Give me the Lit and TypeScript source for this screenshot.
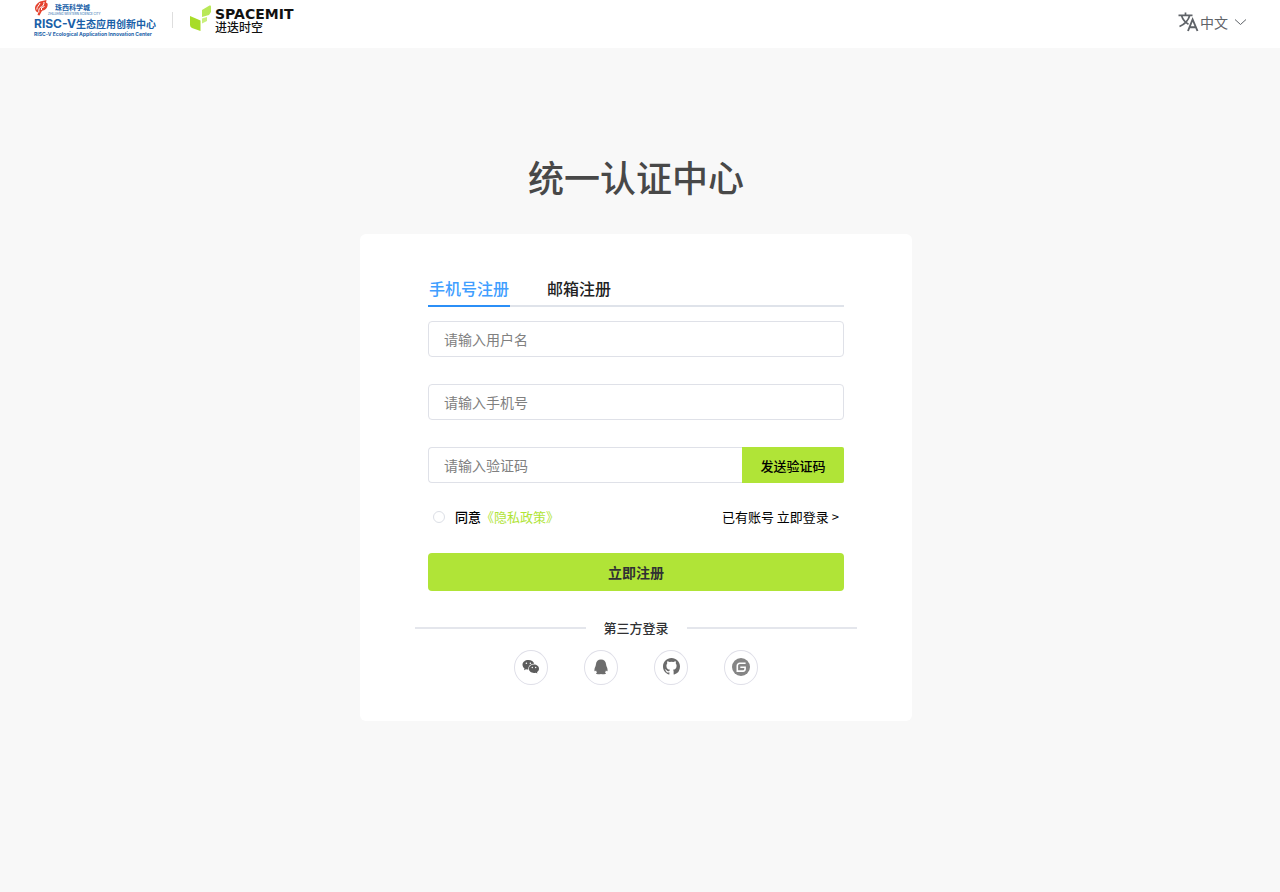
import { LitElement, html, css, svg } from "lit";
import { customElement, state } from "lit/decorators.js";
import { classMap } from "lit/directives/class-map.js";

const wechat = svg`<svg viewBox="0 0 18 16" width="18" height="16" fill="#5c5c5c" aria-hidden="true">
  <path fill-rule="evenodd" d="M6.400 1C3 1 .5 3.100.5 5.800c0 1.500.8 2.800 2 3.700L2 11.300l2-1.100c.8.2 1.600.3 2.400.3-.5-3.300 2.100-5.700 5.800-5.700C11.700 2.600 9.300 1 6.400 1ZM4.400 3.400a.8.8 0 1 1 0 1.600.8.8 0 0 1 0-1.600Zm4 0a.8.8 0 1 1 0 1.600.8.8 0 0 1 0-1.600Z"/>
  <path fill-rule="evenodd" d="M12 5.600c-2.900 0-5.100 1.900-5.100 4.200S9.100 14 12 14c.6 0 1.200-.1 1.800-.3l1.600.9-.4-1.500c1.200-.8 2-1.900 2-3.300 0-2.300-2.200-4.200-5-4.200Zm-1.700 2.200a.7.7 0 1 1 0 1.400.7.7 0 0 1 0-1.400Zm3.400 0a.7.7 0 1 1 0 1.400.7.7 0 0 1 0-1.400Z"/>
</svg>`;

const qq = svg`<svg viewBox="0 0 16 16" width="16" height="16" fill="#6d6d6d" aria-hidden="true">
  <path d="M8 .5C5 .5 3.200 2.300 3 5L2.600 7C1.900 8.300 1.400 9.600 1.400 11c0 1.100.4 1.600.9 1.100l.8-.6c.1.700.4 1.300.9 1.900-.6.200-1 .6-1 1 0 .8 3.600.9 5 .5 1.400.4 5 .3 5-.5 0-.4-.4-.8-1-1 .5-.6.8-1.200.9-1.900l.8.6c.5.5.9 0 .9-1.100 0-1.400-.5-2.700-1.200-4L13 5C12.800 2.300 11 .5 8 .5Z"/>
</svg>`;

const github = svg`<svg viewBox="0 0 16 16" width="17" height="17" fill="#6b6b6b" aria-hidden="true">
  <path d="M8 0C3.580 0 0 3.580 0 8c0 3.540 2.290 6.530 5.470 7.590.4.070.55-.17.55-.38v-1.700c-2.200.5-2.700-.3-3.100-1.100-.2-.5-.5-.9-.9-1.200-.3-.2-.6-.5 0-.5.7 0 1.200.5 1.400.9.7 1.100 1.800.9 2.600.6.1-.5.300-.9.6-1.100C4.700 10.900 3.200 9.900 3.200 7.300c0-.9.3-1.600.8-2.200-.1-.3-.3-1.100.1-2.100 0 0 .8-.2 2.200.8a7.600 7.600 0 0 1 3.400 0c1.400-1 2.200-.8 2.200-.8.4 1 .2 1.800.1 2.100.5.6.8 1.300.8 2.200 0 2.600-1.500 3.600-3.400 3.800.4.300.6.9.6 1.600v2.510c0 .21.15.46.55.38A8.010 8.010 0 0 0 16 8c0-4.420-3.580-8-8-8Z"/>
</svg>`;

const gitee = svg`<svg viewBox="0 0 18 18" width="18" height="18" aria-hidden="true">
  <circle cx="9" cy="9" r="9" fill="#858585"/>
  <path d="M13.600 5.300H7.800a2.500 2.500 0 0 0-2.500 2.500v5.300h5.800a2 2 0 0 0 2-2V9.300H8.300" fill="none" stroke="#fff" stroke-width="1.600"/>
</svg>`;

const providers = [
  { name: "微信登录", icon: wechat },
  { name: "QQ登录", icon: qq },
  { name: "GitHub登录", icon: github },
  { name: "Gitee登录", icon: gitee },
];

@customElement("app-header")
class AppHeader extends LitElement {
  static styles = css`
    :host { display: block; background: #fff; }
    .bar { display: flex; height: 48px; box-sizing: border-box; padding: 0 33px 0 34px; justify-content: space-between; }
    .brands { display: flex; align-items: flex-start; }
    .center { display: flex; flex-direction: column; color: #1a5fa8; text-decoration: none; white-space: nowrap; }
    .top { display: flex; height: 17px; }
    .city { display: flex; flex-direction: column; padding-top: 3px; }
    .city-name { font-size: 7px; line-height: 9px; font-weight: 700; padding-left: 7px; }
    .city-en { font-family: Inter, sans-serif; font-size: 3px; line-height: 4px; }
    .name { font-size: 10px; line-height: 14px; font-weight: 700; }
    .latin { font-family: Inter, sans-serif; font-size: 12px; }
    .name-en { font-family: Inter, sans-serif; font-size: 5px; line-height: 6px; font-weight: 700; }
    .rule { width: 1px; height: 16px; margin: 12px 17px 0 16px; background: #dedede; }
    .spacemit { display: flex; gap: 4px; padding-top: 5px; color: #111; text-decoration: none; }
    .words { display: flex; flex-direction: column; padding-top: 2px; }
    .wordmark { font-family: "DejaVu Sans", sans-serif; font-size: 14px; line-height: 14px; font-weight: 700; }
    .wordmark-cn { font-size: 12px; line-height: 12px; font-weight: 500; }
    .lang { display: flex; align-items: center; align-self: flex-start; gap: 1px; margin-top: 12px; padding: 0; border: 0; background: none; color: #5f6368; font: inherit; font-size: 14px; line-height: 20px; cursor: pointer; }
    .chevron { margin-left: 5px; }
  `;

  render() {
    return html`
      <header class="bar">
        <div class="brands">
          <a class="center" href="#">
            <span class="top">
              <svg width="14" height="16" viewBox="0 0 14 16" aria-hidden="true">
                <path d="M6 1.500 12.500 0l-.5 2.500 1.500 1c.6 2.500-.5 5.300-3 6.500-1 .4-2 .6-2.500.8L5.500 15.500 3.500 15l.8-2.500C2 12.300.8 10 1 7.500 1.200 5 3.500 3 6 1.500Z" fill="#e5432f"/>
                <path d="M2.800 9.500C2.800 6.500 5 6 6 3M4.800 12.500c-.3-3.500.7-5 2.800-5.800C9.200 6 10 4.500 10 2M7.500 10V7.800l3-1.300" fill="none" stroke="#fff"/>
              </svg>
              <span class="city">
                <span class="city-name">珠西科学城</span>
                <span class="city-en">ZHUJIANG WESTERN SCIENCE CITY</span>
              </span>
            </span>
            <span class="name"><span class="latin">RISC-V</span>生态应用创新中心</span>
            <span class="name-en">RISC-V Ecological Application Innovation Center</span>
          </a>
          <span class="rule"></span>
          <a class="spacemit" href="#">
            <svg width="21" height="27" viewBox="0 0 21 27" aria-hidden="true">
              <path d="M12 5 19.500.500Q21 0 21 1.500V7l-2 3-7 2Z" fill="#b9e858"/>
              <path d="m12 13.500 5-1.500v4l-5 2.500Z" fill="#c9ef7d"/>
              <path d="M0 11 10.500 15.500v10.500L2 23Q0 22 0 20Z" fill="#a8dc28"/>
            </svg>
            <span class="words">
              <span class="wordmark">SPACEMIT</span>
              <span class="wordmark-cn">进迭时空</span>
            </span>
          </a>
        </div>
        <button class="lang" type="button">
          <svg width="21" height="20" viewBox="0 0 21 20" fill="none" stroke="#5f6368" stroke-width="1.700" aria-hidden="true">
            <path d="M.5 3.400h14M7.500.5v3M3.500 3.500c1.300 4.300 4 7 7 8.700M11.700 3.500C10.300 8.500 6 12.500 1.500 14.500"/>
            <path d="m10 19 4.600-11.500L19.500 19M11.700 15.200h6.200" stroke-width="1.900"/>
          </svg>
          <span>中文</span>
          <svg class="chevron" width="13" height="8" viewBox="0 0 13 8" fill="none" stroke="#5f6368" aria-hidden="true"><path d="m1 1.500 5.500 5 5.500-5"/></svg>
        </button>
      </header>
    `;
  }
}

@customElement("register-card")
class RegisterCard extends LitElement {
  @state() private mode: "phone" | "email" = "phone";

  static styles = css`
    :host { display: block; }
    .card { box-sizing: border-box; padding: 40px 68px 36px; border-radius: 6px; background: #fff; color: #000; }
    .tabs { display: flex; gap: 36px; border-bottom: 2px solid #dfe3ea; margin-bottom: 14px; }
    button, input { font: inherit; margin: 0; box-sizing: border-box; }
    button { cursor: pointer; }
    .tab { padding: 2px 1px 5px; border: 0; border-bottom: 2px solid transparent; margin-bottom: -2px; background: none; font-size: 16px; line-height: 24px; font-weight: 500; color: #222; }
    .tab.active { color: #409eff; border-color: #2b8ff7; }
    .fields { display: flex; flex-direction: column; gap: 27px; }
    .field { min-width: 0; width: 100%; height: 36px; padding: 0 15px; border: 1px solid #dfe1e8; border-radius: 4px; background: #fff; font-size: 14px; line-height: 20px; outline: 0; }
    .field::placeholder { color: #808080; opacity: 1; }
    .code { display: flex; }
    .code .field { flex: 1; border-right: 0; border-radius: 4px 0 0 4px; }
    .send { width: 102px; height: 36px; padding: 0; border: 0; border-radius: 0 2px 2px 0; background: #b0e437; font-size: 13px; font-weight: 500; color: #000; }
    .meta { display: flex; align-items: center; justify-content: space-between; padding: 0 5px; margin: 24px 0 26px; font-size: 13px; line-height: 20px; }
    .agree { display: flex; align-items: center; font-weight: 500; }
    .radio { appearance: none; width: 12px; height: 12px; margin: 0 10px 0 0; border: 1px solid #dcdfe6; border-radius: 50%; background: #fff; }
    .radio:checked { border: 4px solid #b0e437; }
    .policy { color: #b0e437; text-decoration: none; font-weight: 400; }
    .login { color: #000; text-decoration: none; }
    .submit { display: block; width: 100%; height: 38px; padding: 0; border: 0; border-radius: 4px; background: #b0e437; color: #303133; font-size: 14px; font-weight: 700; }
    .third { display: flex; align-items: center; gap: 18px; margin: 27px -13px 12px; font-size: 13px; line-height: 20px; font-weight: 500; color: #303133; }
    .line { flex: 1; height: 2px; background: #e4e6ec; }
    .providers { display: flex; justify-content: center; gap: 36px; }
    .provider { display: flex; align-items: center; justify-content: center; width: 34px; height: 35px; padding: 0 0 2px; border: 1px solid #dfdfe8; border-radius: 50%; background: #fff; }
  `;

  render() {
    const phone = this.mode === "phone";
    return html`
      <form class="card" @submit=${(e: Event) => e.preventDefault()}>
        <div class="tabs" role="tablist">
          <button type="button" role="tab" aria-selected=${phone} class=${classMap({ tab: true, active: phone })} @click=${() => (this.mode = "phone")}>手机号注册</button>
          <button type="button" role="tab" aria-selected=${!phone} class=${classMap({ tab: true, active: !phone })} @click=${() => (this.mode = "email")}>邮箱注册</button>
        </div>
        <div class="fields">
          <input class="field" type="text" aria-label="用户名" placeholder="请输入用户名" />
          <input class="field" type="text" aria-label=${phone ? "手机号" : "邮箱"} placeholder=${phone ? "请输入手机号" : "请输入邮箱"} />
          <div class="code">
            <input class="field" type="text" aria-label="验证码" placeholder="请输入验证码" />
            <button class="send" type="button">发送验证码</button>
          </div>
        </div>
        <div class="meta">
          <span class="agree">
            <input class="radio" id="agree" type="radio" />
            <label for="agree">同意</label>
            <a class="policy" href="#">《隐私政策》</a>
          </span>
          <a class="login" href="#">已有账号 立即登录 &gt;</a>
        </div>
        <button class="submit" type="submit">立即注册</button>
        <div class="third"><span class="line"></span><span>第三方登录</span><span class="line"></span></div>
        <div class="providers">
          ${providers.map((p) => html`<button class="provider" type="button" aria-label=${p.name}>${p.icon}</button>`)}
        </div>
      </form>
    `;
  }
}

@customElement("app-root")
class AppRoot extends LitElement {
  static styles = css`
    :host { display: flex; flex-direction: column; min-height: 100vh; background: #f8f8f8; font-family: "Noto Sans CJK SC", "Noto Sans", sans-serif; }
    .main { display: flex; flex-direction: column; align-items: center; padding: 101px 8px 40px 0; }
    .title { margin: 0 0 31px; font-size: 36px; line-height: 54px; font-weight: 500; color: #484848; }
    .panel { width: 100%; max-width: 552px; }
  `;

  render() {
    return html`
      <app-header></app-header>
      <main class="main">
        <h1 class="title">统一认证中心</h1>
        <register-card class="panel"></register-card>
      </main>
    `;
  }
}
